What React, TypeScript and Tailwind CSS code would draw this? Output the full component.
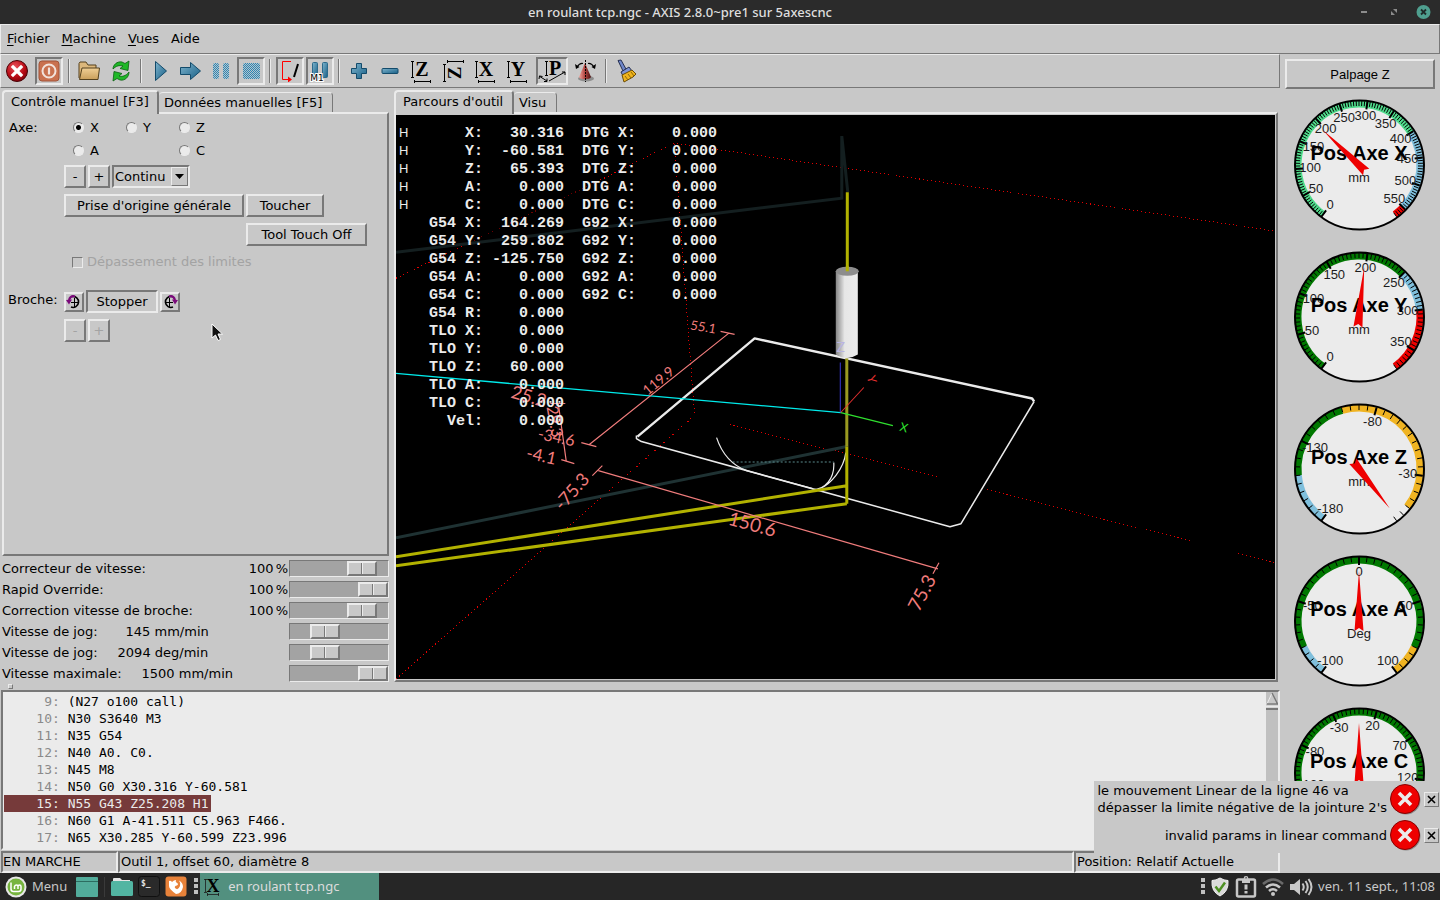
import { useState, type ReactNode } from 'react';
import clsx from 'clsx';

const raised = 'border-2 border-t-[#ebebeb] border-l-[#ebebeb] border-r-[#787878] border-b-[#787878]';
const sunken = 'border-2 border-t-[#787878] border-l-[#787878] border-r-[#ebebeb] border-b-[#ebebeb]';

/* ---------- title bar and menu ---------- */

function TitleBar() {
  return (
    <header className="flex h-6 items-center justify-end bg-[#2b2b2b] px-2 font-['Noto_Sans',sans-serif]">
      <h1 className="flex-1 pr-2 pl-1 text-center text-[13px] leading-6 font-medium text-[#dedede]">
        en roulant tcp.ngc - AXIS 2.8.0~pre1 sur 5axescnc
      </h1>
      <div className="flex items-center gap-[14px]">
        <button aria-label="Réduire" className="flex size-4 items-center justify-center">
          <svg width="6" height="2"><rect width="6" height="2" fill="#8c8c8c" /></svg>
        </button>
        <button aria-label="Restaurer" className="flex size-4 items-center justify-center">
          <svg width="6" height="6" viewBox="0 0 6 6" fill="#8c8c8c">
            <path d="M2 0h4v4zM0 2v4h4z" />
          </svg>
        </button>
        <button aria-label="Fermer" className="size-4">
          <svg width="16" height="16" viewBox="0 0 16 16">
            <circle cx="7.500" cy="8" r="7" fill="#4f9f8f" />
            <path d="M5 5.500l5 5M10 5.500l-5 5" stroke="#1f2b29" strokeWidth="1.800" />
          </svg>
        </button>
      </div>
    </header>
  );
}

function MenuBar() {
  return (
    <nav className="flex h-[30px] items-center gap-3 border border-t-[#ebebeb] border-r-[#787878] border-b-[#787878] border-l-[#ebebeb] px-1.5 pb-0.5">
      {['Fichier', 'Machine', 'Vues'].map((m) => (
        <button key={m}>
          <span className="underline underline-offset-2">{m[0]}</span>
          {m.slice(1)}
        </button>
      ))}
      <button>Aide</button>
    </nav>
  );
}

/* ---------- toolbar ---------- */

function Defs() {
  return (
    <svg width="0" height="0" className="absolute">
      <defs>
        <linearGradient id="blue" x1="0" y1="0" x2="1" y2="1">
          <stop offset="0" stopColor="#7fb4cd" />
          <stop offset="1" stopColor="#175f86" />
        </linearGradient>
        <pattern id="stipple" width="2" height="2" patternUnits="userSpaceOnUse">
          <rect width="2" height="2" fill="#b4c4cc" />
          <rect width="1" height="1" fill="#2f86b3" />
          <rect x="1" y="1" width="1" height="1" fill="#2f86b3" />
        </pattern>
        <radialGradient id="red" cx="0.4" cy="0.3" r="0.8">
          <stop offset="0" stopColor="#e8505a" />
          <stop offset="0.600" stopColor="#b80a14" />
          <stop offset="1" stopColor="#6d0008" />
        </radialGradient>
        <linearGradient id="folder" x1="0" y1="0" x2="0" y2="1">
          <stop offset="0" stopColor="#f0cf95" />
          <stop offset="1" stopColor="#c99f5b" />
        </linearGradient>
        <linearGradient id="cone" x1="0" y1="0" x2="1" y2="0">
          <stop offset="0" stopColor="#f2a49c" />
          <stop offset="0.500" stopColor="#b0433f" />
          <stop offset="1" stopColor="#4c1010" />
        </linearGradient>
        <linearGradient id="tool" x1="0" y1="0" x2="1" y2="0">
          <stop offset="0" stopColor="#858585" />
          <stop offset="0.400" stopColor="#e6e6e6" />
          <stop offset="1" stopColor="#ebebeb" />
        </linearGradient>
      </defs>
    </svg>
  );
}

function ViewGlyph({ letter }: { letter: string }) {
  return (
    <svg width="24" height="24" viewBox="0 0 24 24">
      <path d="M2.500 2v17M1 2.500h3M1 18.500h3M4 22.500h17M4.500 21v3M20.500 21v3" stroke="#000" fill="none" />
      <text x="12" y="17" textAnchor="middle" fontFamily="Liberation Serif, serif" fontWeight="bold" fontSize="20">
        {letter}
      </text>
    </svg>
  );
}

const icons: Record<string, ReactNode> = {
  estop: (
    <svg width="24" height="24" viewBox="0 0 24 24">
      <circle cx="12" cy="12" r="10.500" fill="url(#red)" stroke="#4a0206" />
      <path d="M8 8l8 8M16 8l-8 8" stroke="#fff" strokeWidth="3.200" strokeLinecap="square" />
    </svg>
  ),
  power: (
    <svg width="22" height="22" viewBox="0 0 22 22">
      <rect x="1" y="1" width="20" height="20" rx="3" fill="#c9714f" stroke="#a2553a" />
      <circle cx="11" cy="11" r="6.500" fill="none" stroke="#f2e3dc" strokeWidth="2" />
      <path d="M11 7.500v7" stroke="#f2e3dc" strokeWidth="2.200" />
    </svg>
  ),
  open: (
    <svg width="24" height="20" viewBox="0 0 24 20">
      <path d="M2 17V2.500L3 1h6l2 3h8v4" fill="#dcb77b" stroke="#54411e" />
      <path d="M5 7h17.500l-1.500 11.500H2.500z" fill="url(#folder)" stroke="#54411e" />
    </svg>
  ),
  reload: (
    <svg width="22" height="22" viewBox="0 0 22 22" fill="#1fb827" stroke="#0b5f12" strokeWidth="0.800">
      <path d="M3 9c0-4 4-8 9-7l3 1.500 4-2.500-1 9.500-8-2 3-2.500C9 5 6 6 3 9z" />
      <path d="M19 12c0 5-4 9-9 8l-3-1.500-4 2.500 1-9.500 8 2-3 2.500c3 1 7 0 10-4z" />
    </svg>
  ),
  run: (
    <svg width="14" height="22" viewBox="0 0 14 22">
      <path d="M1.500 1.500l11 9.500-11 9.500z" fill="url(#blue)" stroke="#134b6b" />
    </svg>
  ),
  step: (
    <svg width="24" height="20" viewBox="0 0 24 20">
      <path d="M1.500 6.500h10V1.500l10 8.500-10 8.500v-5h-10z" fill="url(#blue)" stroke="#134b6b" />
    </svg>
  ),
  pause: (
    <svg width="18" height="18" viewBox="0 0 18 18" fill="url(#stipple)">
      <rect x="1" y="1" width="6" height="16" rx="2" />
      <rect x="11" y="1" width="6" height="16" rx="2" />
    </svg>
  ),
  stop: (
    <svg width="18" height="18" viewBox="0 0 18 18">
      <rect x="1" y="1" width="17" height="16" rx="2" fill="url(#stipple)" />
    </svg>
  ),
  skip: (
    <svg width="22" height="22" viewBox="0 0 22 22" fill="none">
      <path d="M12 1.500H3.500v18H9" stroke="#f00" />
      <path d="M9 16.500l4 3-4 3z" fill="#f00" />
      <path d="M19 4l-4 13" stroke="#000" strokeWidth="2" />
    </svg>
  ),
  m1: (
    <svg width="24" height="24" viewBox="0 0 24 24">
      <rect x="4.500" y="3.500" width="5" height="15" rx="1" fill="url(#blue)" stroke="#2b6a8c" />
      <rect x="14.500" y="3.500" width="5" height="15" rx="1" fill="url(#blue)" stroke="#2b6a8c" />
      <text x="9" y="22" textAnchor="middle" fontFamily="DejaVu Sans, sans-serif" fontSize="9" stroke="#fff" strokeWidth="2" paintOrder="stroke">
        M1
      </text>
    </svg>
  ),
  plus: (
    <svg width="18" height="18" viewBox="0 0 18 18">
      <path d="M6.500 1.500h5v5h5v5h-5v5h-5v-5h-5v-5h5z" fill="url(#blue)" stroke="#134b6b" strokeLinejoin="round" />
    </svg>
  ),
  minus: (
    <svg width="18" height="18" viewBox="0 0 18 18">
      <rect x="1" y="6.500" width="16" height="5" rx="1" fill="url(#blue)" stroke="#134b6b" />
    </svg>
  ),
  viewZ: <ViewGlyph letter="Z" />,
  viewZ2: (
    <svg width="24" height="24" viewBox="0 0 24 24">
      <path d="M2.500 5v18M1 5.500h3M1 22.500h3M5 2.500h17M5.500 1v3M21.500 1v3" stroke="#000" fill="none" />
      <text x="-14" y="19" transform="rotate(-90)" textAnchor="middle" fontFamily="Liberation Serif, serif" fontWeight="bold" fontSize="19">
        Z
      </text>
    </svg>
  ),
  viewX: <ViewGlyph letter="X" />,
  viewY: <ViewGlyph letter="Y" />,
  viewP: (
    <svg width="28" height="24" viewBox="0 0 28 24">
      <path d="M8.500 2v15M7 2.500h3M7 16.500h3M1 17l8 5M1 20l.500-3 3 .500M6 22.500h3v-3M11 22l16-9M24 13h3v3" stroke="#000" fill="none" />
      <text x="17" y="16" textAnchor="middle" fontFamily="Liberation Serif, serif" fontWeight="bold" fontSize="20">
        P
      </text>
    </svg>
  ),
  rotate: (
    <svg width="24" height="24" viewBox="0 0 24 24">
      <ellipse cx="12" cy="19.500" rx="8" ry="3" fill="#8d8d8d" />
      <path d="M11 4l6 14c-1 3-11 3-12 0z" fill="url(#cone)" />
      <path d="M11.500 1v22" stroke="#000" strokeDasharray="2 1" />
      <path d="M3 8c2-3 4-4 6-3.500M20 8c-2-3-4-4-6-3.500" stroke="#000" strokeWidth="1.200" fill="none" />
      <path d="M1 5l1 5 3.500-2zM22 5l-1 5-3.500-2z" />
    </svg>
  ),
  clear: (
    <svg width="22" height="24" viewBox="0 0 22 24">
      <path d="M2 1.500l3-.5 5 9-3 2z" fill="#6f86c9" stroke="#263052" />
      <path d="M5 13l8-5 3 4-9 5z" fill="#7e93d2" stroke="#263052" />
      <path d="M6 16l10-5 4 4-3 3-9 5z" fill="#f0b41c" stroke="#6b4c06" />
      <path d="M9 17l3 4M12 15l3 4M15 13l3 4" stroke="#8f6a0a" />
    </svg>
  ),
};

type Tool = { id: string; label: string; width: string; on?: boolean };

const toolGroups: Tool[][] = [
  [
    { id: 'estop', label: "Arrêt d'urgence", width: 'w-8' },
    { id: 'power', label: 'Marche', width: 'w-8', on: true },
  ],
  [
    { id: 'open', label: 'Ouvrir', width: 'w-8' },
    { id: 'reload', label: 'Recharger', width: 'w-8' },
  ],
  [
    { id: 'run', label: 'Départ cycle', width: 'w-[30px]' },
    { id: 'step', label: 'Pas à pas', width: 'w-[30px]' },
    { id: 'pause', label: 'Pause', width: 'w-[30px]' },
    { id: 'stop', label: 'Stopper le programme', width: 'w-[30px]', on: true },
  ],
  [
    { id: 'skip', label: 'Ignorer les lignes', width: 'w-[30px]', on: true },
    { id: 'm1', label: 'Pause optionnelle', width: 'w-[30px]', on: true },
  ],
  [
    { id: 'plus', label: 'Zoom avant', width: 'w-[30px]' },
    { id: 'minus', label: 'Zoom arrière', width: 'w-8' },
    { id: 'viewZ', label: 'Vue Z', width: 'w-8' },
    { id: 'viewZ2', label: 'Vue Z tournée', width: 'w-8' },
    { id: 'viewX', label: 'Vue X', width: 'w-8' },
    { id: 'viewY', label: 'Vue Y', width: 'w-8' },
    { id: 'viewP', label: 'Perspective', width: 'w-9', on: true },
    { id: 'rotate', label: 'Rotation', width: 'w-8' },
  ],
  [{ id: 'clear', label: 'Effacer le tracé', width: 'w-8' }],
];

function Toolbar() {
  return (
    <div className="flex h-[34px] items-center border border-t-[#ebebeb] border-r-[#787878] border-b-[#787878] border-l-[#ebebeb]">
      {toolGroups.map((group, i) => (
        <div key={i} className="flex items-center">
          {i > 0 && (
            <span className={clsx('ml-[3px] h-6 w-0.5 border-r border-l border-l-[#787878] border-r-[#ebebeb]', i === 1 ? 'mr-[3px]' : 'mr-1')} />
          )}
          {group.map((t) => (
            <span key={t.id} className={clsx('flex justify-center', t.width)}>
              <button
                aria-label={t.label}
                className={clsx(
                  'flex h-7 items-center justify-center',
                  t.id === 'viewP' ? 'w-8' : 'w-7',
                  t.on ? sunken : 'border-2 border-transparent',
                )}
              >
                <span className="flex shrink-0">{icons[t.id]}</span>
              </button>
            </span>
          ))}
        </div>
      ))}
    </div>
  );
}

/* ---------- left notebook ---------- */

function Tabs({ items }: { items: string[] }) {
  return (
    <div className="flex items-end">
      {items.map((t, i) => (
        <button
          key={t}
          className={clsx(
            'rounded-t-[4px] text-left',
            i === 0
              ? 'relative z-10 -mb-0.5 h-6 min-w-[120px] border-t-2 border-r-2 border-l-2 border-t-[#ebebeb] border-r-[#787878] border-l-[#ebebeb] bg-[#c8c8c8] pr-2 pb-1 pl-[7px]'
              : 'h-5 border-t border-r border-t-[#ebebeb] border-r-[#787878] pr-2.5 pl-[5px]',
          )}
        >
          {t}
        </button>
      ))}
    </div>
  );
}

function PushButton({ children, className, ...rest }: React.ComponentProps<'button'>) {
  return (
    <button className={clsx('flex h-[23px] items-center justify-center leading-none disabled:text-[#a3a3a3]', raised, className)} {...rest}>
      {children}
    </button>
  );
}

function SpindleIcon({ flip }: { flip?: boolean }) {
  return (
    <svg width="16" height="16" viewBox="0 0 16 16" fill="none" className={clsx(flip && '-scale-x-100')}>
      <path d="M6 2.500a5.500 5.500 0 1 1-1 10.500" stroke="#000" strokeWidth="1.600" />
      <path d="M8.500 4v9M5 8.500h7" stroke="#000" />
      <path d="M9 2.500C6 1.500 4 3 3 6" stroke="#7b0a7b" strokeWidth="2.200" />
      <path d="M0 6l6-.5-3 5z" fill="#7b0a7b" />
    </svg>
  );
}

function ManualPanel() {
  const [axis, setAxis] = useState('X');
  const radio = (a: string, pos: string) => (
    <label key={a} className={clsx('flex items-center gap-1.5', pos)}>
      <input
        type="radio"
        name="axis"
        checked={axis === a}
        onChange={() => setAxis(a)}
        className="size-[11px] appearance-none rounded-full border border-t-[#787878] border-r-[#ebebeb] border-b-[#ebebeb] border-l-[#787878] bg-[#ebebeb] checked:bg-[radial-gradient(circle,#000_0_2px,#ebebeb_3px)]"
      />
      {a}
    </label>
  );

  return (
    <section className={clsx('grid flex-1 grid-cols-[60px_1fr] content-start pt-0.5 pr-1', raised)}>
      <span className="pl-[5px] leading-[23px]">Axe:</span>
      <div className="grid grid-cols-[53px_53px_53px] pl-[9px] leading-[23px]">
        {radio('X', '')}
        {radio('Y', '')}
        {radio('Z', '')}
        {radio('A', 'col-start-1')}
        {radio('C', 'col-start-3')}
      </div>

      <div className="col-start-2 flex gap-0.5 pt-[3px]">
        <PushButton className="w-[22px]">-</PushButton>
        <PushButton className="w-[22px]">+</PushButton>
        <div className={clsx('relative h-[23px] w-[78px]', sunken)}>
          <select aria-label="Incrément" className="h-full w-full appearance-none pl-px leading-none outline-none">
            <option>Continu</option>
          </select>
          <span className="pointer-events-none absolute top-0 right-0 flex h-[19px] w-[17px] items-center justify-center border border-t-[#ebebeb] border-r-[#787878] border-b-[#787878] border-l-[#ebebeb] bg-[#c8c8c8]">
            <svg width="9" height="5"><path d="M0 0h9l-4.500 5z" /></svg>
          </span>
        </div>
      </div>

      <div className="col-start-2 grid grid-cols-[180px_auto] justify-start gap-x-0.5 gap-y-1.5 pt-1.5">
        <PushButton>Prise d'origine générale</PushButton>
        <PushButton className="w-[78px]">Toucher</PushButton>
        <PushButton className="col-start-2 w-[121px]">Tool Touch Off</PushButton>
      </div>

      <label className="col-start-2 flex items-center gap-1 pt-1.5 pl-2 leading-5 text-[#a3a3a3]">
        <input
          type="checkbox"
          disabled
          className="size-[11px] appearance-none border border-t-[#787878] border-r-[#ebebeb] border-b-[#ebebeb] border-l-[#787878]"
        />
        Dépassement des limites
      </label>

      <span className="pt-[18px] pl-1 leading-5">Broche:</span>
      <div className="flex items-center gap-0.5 pt-[18px]">
        <button aria-label="Broche anti-horaire" className={clsx('flex size-5 items-center justify-center', raised)}>
          <SpindleIcon />
        </button>
        <button className={clsx('h-[23px] w-[72px] leading-none', sunken)}>Stopper</button>
        <button aria-label="Broche horaire" className={clsx('flex size-5 items-center justify-center', raised)}>
          <SpindleIcon flip />
        </button>
      </div>
      <div className="col-start-2 flex gap-0.5 pt-1.5">
        <PushButton disabled className="w-[22px]">-</PushButton>
        <PushButton disabled className="w-[22px]">+</PushButton>
      </div>
    </section>
  );
}

const overrides = [
  { label: 'Correcteur de vitesse:', value: '100', unit: '%', pos: 84 },
  { label: 'Rapid Override:', value: '100', unit: '%', pos: 100 },
  { label: 'Correction vitesse de broche:', value: '100', unit: '%', pos: 84 },
  { label: 'Vitesse de jog:', value: '145', unit: 'mm/min', pos: 30 },
  { label: 'Vitesse de jog:', value: '2094', unit: 'deg/min', pos: 30 },
  { label: 'Vitesse maximale:', value: '1500', unit: 'mm/min', pos: 100 },
];

function Sliders() {
  return (
    <div className="pt-0.5">
      {overrides.map((o, i) => (
        <div key={i} className="flex h-[21px] items-center">
          <label htmlFor={`ov${i}`} className={clsx(o.unit === '%' && 'flex-1')}>
            {o.label}
          </label>
          {o.unit === '%' ? (
            <span className="flex gap-0.5 pr-px">
              <span>{o.value}</span>
              <span>{o.unit}</span>
            </span>
          ) : (
            <span className={clsx('flex-1', o.value === '145' ? 'pl-7' : 'pl-5')}>
              {o.value} {o.unit}
            </span>
          )}
          <input
            id={`ov${i}`}
            type="range"
            defaultValue={o.pos}
            className="h-[17px] w-[100px] appearance-none border border-t-[#787878] border-r-[#ebebeb] border-b-[#ebebeb] border-l-[#787878] bg-[#a3a3a3] [&::-webkit-slider-thumb]:h-[15px] [&::-webkit-slider-thumb]:w-[30px] [&::-webkit-slider-thumb]:appearance-none [&::-webkit-slider-thumb]:border-2 [&::-webkit-slider-thumb]:border-t-[#ebebeb] [&::-webkit-slider-thumb]:border-r-[#787878] [&::-webkit-slider-thumb]:border-b-[#787878] [&::-webkit-slider-thumb]:border-l-[#ebebeb] [&::-webkit-slider-thumb]:bg-[linear-gradient(90deg,#c8c8c8_12px,#787878_12px_13px,#ebebeb_13px_14px,#c8c8c8_14px)]"
          />
        </div>
      ))}
    </div>
  );
}

/* ---------- preview ---------- */

const dro: [string, string, string?][] = [
  ['X:', '30.316', 'DTG X:'],
  ['Y:', '-60.581', 'DTG Y:'],
  ['Z:', '65.393', 'DTG Z:'],
  ['A:', '0.000', 'DTG A:'],
  ['C:', '0.000', 'DTG C:'],
  ['G54 X:', '164.269', 'G92 X:'],
  ['G54 Y:', '259.802', 'G92 Y:'],
  ['G54 Z:', '-125.750', 'G92 Z:'],
  ['G54 A:', '0.000', 'G92 A:'],
  ['G54 C:', '0.000', 'G92 C:'],
  ['G54 R:', '0.000'],
  ['TLO X:', '0.000'],
  ['TLO Y:', '0.000'],
  ['TLO Z:', '60.000'],
  ['TLO A:', '0.000'],
  ['TLO C:', '0.000'],
  ['Vel:', '0.000'],
];

const dims = [
  { t: '55.1', x: 702, y: 331, a: 10, s: 13 },
  { t: '119.9', x: 661, y: 384, a: -40, s: 14 },
  { t: '25.2', x: 527, y: 402, a: 16, s: 18 },
  { t: '29.3', x: 549, y: 422, a: 80, s: 16 },
  { t: '-34.6', x: 555, y: 442, a: 12, s: 16 },
  { t: '-4.1', x: 540, y: 461, a: 12, s: 17 },
  { t: '-75.3', x: 576, y: 495, a: -48, s: 18 },
  { t: '150.6', x: 750, y: 530, a: 15, s: 19 },
  { t: '75.3', x: 927, y: 595, a: -62, s: 19 },
];

function Scene() {
  return (
    <svg className="absolute inset-0 h-full w-full" viewBox="396 115 879 563" preserveAspectRatio="xMinYMin slice" fill="none">
      <g stroke="#e00000" strokeDasharray="1 3" shapeRendering="crispEdges">
        <path d="M396 278L470 242" />
        <path d="M470 242L600 180" stroke="#6b0000" />
        <path d="M600 180L665 147M673 143L1275 231M674 144L694 415L396 678" />
        <path d="M729 424L937 476M986 489L1192 541M1233 552L1275 562" />
      </g>
      <path d="M396 252L841 198V136L847 192" stroke="#141f20" strokeWidth="3" />
      <path d="M396 537L846 446" stroke="#1f3233" strokeWidth="3" />
      <path d="M732 461.500H833" stroke="#5a8a8c" strokeDasharray="2 2" />

      <path d="M637 436L754 338L1031 398L1033 401" stroke="#ebebeb" strokeWidth="2.400" strokeLinejoin="round" />
      <path d="M1033 401L960 523L949 526L641 441L636 438V435" stroke="#ebebeb" strokeWidth="1.500" strokeLinejoin="round" />
      <path d="M716 437C721 452 730 464 746 470L812 488M833 462C834 478 824 489 812 489M845 452C843 468 830 484 819 488" stroke="#ebebeb" strokeWidth="1.200" />

      <path d="M846.500 192V272M396 556L846 485M396 565L846 503M846 446V503" stroke="#b2b200" strokeWidth="3" />
      <path d="M846 358V446" stroke="#9a9a20" strokeWidth="3" />
      <path d="M835 271V354Q846 361 857 354V271z" fill="url(#tool)" />
      <ellipse cx="846.500" cy="271" rx="11.500" ry="4.500" fill="#8d8d8d" />
      <path d="M846.500 266V271" stroke="#b2b200" strokeWidth="3" />

      <path d="M396 373L840 412" stroke="#00ebeb" strokeWidth="1.300" />
      <path d="M839.500 362V412" stroke="#3a3ad8" />
      <path d="M840 412L863 387" stroke="#e83030" />
      <path d="M840 412L892 425" stroke="#2fe02f" strokeWidth="1.300" />

      <g stroke="#f07c7c" strokeWidth="1.200">
        <path d="M728 333L589 444M720 331L734 334M581 442L596 446" />
        <path d="M598 470L937 568M602 465L592 475M938 562L932 573" />
        <path d="M558 403L566 461M550 403H565M561 459L574 463" />
      </g>
      <g fill="#f07c7c" fontFamily="Lato, sans-serif" fontWeight="400" textAnchor="middle">
        {dims.map((d) => (
          <text key={d.t} x={d.x} y={d.y} fontSize={d.s} transform={`rotate(${d.a} ${d.x} ${d.y})`}>
            {d.t}
          </text>
        ))}
        <text x="902" y="431" fontSize="12" fill="#2fe02f" transform="rotate(15 902 431)">X</text>
        <text x="867" y="380" fontSize="12" fill="#e83030" transform="rotate(75 867 380)">Y</text>
        <text x="840" y="352" fontSize="14" fill="#b9b4e0">Z</text>
      </g>
    </svg>
  );
}

function Preview() {
  return (
    <section className={clsx('flex flex-1', raised)}>
      <div className="relative flex-1 overflow-hidden border-t border-r border-b border-[#c8c8c8] bg-black pt-[9px]">
        <Scene />
        <div className="relative font-['Liberation_Mono',monospace] text-[15px] leading-[20px] font-bold text-[#ebebeb]">
          {dro.map(([label, value, label2], i) => (
            <div key={label} className="flex h-[18px] items-center pl-[3px]">
              <span className="w-[30px] font-['Liberation_Sans',sans-serif] text-[13px] font-normal">{i < 5 && 'H'}</span>
              <span className="pt-0.5 whitespace-pre">
                {label.padStart(6) + value.padStart(9)}
                {label2 && '  ' + label2 + '0.000'.padStart(9)}
              </span>
            </div>
          ))}
        </div>
      </div>
    </section>
  );
}

/* ---------- program listing and status ---------- */

const program: [number, string][] = [
  [9, '(N27 o100 call)'],
  [10, 'N30 S3640 M3'],
  [11, 'N35 G54'],
  [12, 'N40 A0. C0.'],
  [13, 'N45 M8'],
  [14, 'N50 G0 X30.316 Y-60.581'],
  [15, 'N55 G43 Z25.208 H1'],
  [16, 'N60 G1 A-41.511 C5.963 F466.'],
  [17, 'N65 X30.285 Y-60.599 Z23.996'],
];

function Listing() {
  return (
    <section className={clsx('ml-px flex bg-[#ebebeb]', sunken)}>
      <div className="flex-1 pt-px pb-0.5 pl-px font-['DejaVu_Sans_Mono',monospace] text-[13px] leading-[17px] text-black">
        {program.map(([n, code]) => (
          <div key={n} className={clsx('w-fit pl-px whitespace-pre', n === 15 && 'bg-[#763a3a] pr-0.5 text-[#ebebeb]')}>
            <span className={clsx(n !== 15 && 'text-[#8a8a8a]')}>{String(n).padStart(6)}: </span>
            {code}
          </div>
        ))}
      </div>
      <div className="w-3 bg-[#c0c0c0]">
        <svg width="12" height="18" viewBox="0 0 12 18">
          <path d="M6 1L1 12h10z" fill="#c8c8c8" stroke="#ebebeb" />
          <path d="M6 1l5.500 11H1" fill="none" stroke="#787878" strokeWidth="1.500" />
          <path d="M0 14.500h12" stroke="#ebebeb" strokeWidth="2" />
          <path d="M0 17h12" stroke="#787878" strokeWidth="2" />
        </svg>
      </div>
    </section>
  );
}

function StatusBar() {
  return (
    <footer className="ml-px flex h-[23px] pt-px leading-[17px]">
      <span className={clsx('w-[117px]', sunken)}>EN MARCHE</span>
      <span className={clsx('flex-1 pl-px', sunken)}>Outil 1, offset 60, diamètre 8</span>
      <span className={clsx('w-[206px] pl-px', sunken)}>Position: Relatif Actuelle</span>
    </footer>
  );
}

/* ---------- gauges ---------- */

type Zone = [number, string];
type GaugeProps = { title: string; unit: string; min: number; max: number; zones: Zone[]; needle: number };

// dial angles run clockwise from straight down, 36° to 324°
const polar = (deg: number, r: number) => {
  const a = (deg * Math.PI) / 180;
  return [75 - r * Math.sin(a), 76 + r * Math.cos(a)];
};

function Gauge({ title, unit, min, max, zones, needle }: GaugeProps) {
  const angle = (v: number) => 36 + ((v - min) / (max - min)) * 288;
  const ticks = Array.from({ length: Math.floor((max - min) / 5) + 1 }, (_, i) => min + i * 5);
  const majors = ticks.filter((_, i) => i % 10 === 0);

  const arc = (from: number, to: number) => {
    const [x1, y1] = polar(angle(from), 61);
    const [x2, y2] = polar(angle(to), 61);
    return `M${x1} ${y1}A61 61 0 ${angle(to) - angle(from) > 180 ? 1 : 0} 1 ${x2} ${y2}`;
  };
  const tick = (v: number, r1: number, r2: number) => {
    const [x1, y1] = polar(angle(v), r1);
    const [x2, y2] = polar(angle(v), r2);
    return `M${x1} ${y1}L${x2} ${y2}`;
  };

  return (
    <svg width="150" height="152" viewBox="1 0 150 152" className="font-['Liberation_Sans',sans-serif]">
      <circle cx="75" cy="76" r="65" fill="#ebebeb" />
      {zones.map(([end, color], i) => (
        <path key={i} d={arc(i ? zones[i - 1][0] : min, end)} stroke={color} strokeWidth="7" fill="none" />
      ))}
      <circle cx="75.500" cy="76" r="64.500" fill="none" stroke="#000" strokeWidth="2" />
      <path d={ticks.map((v) => tick(v, 59, 64)).join('')} stroke="#000" />
      <path d={majors.map((v) => tick(v, 56, 64)).join('')} stroke="#000" strokeWidth="2" />
      {majors.map((v) => {
        const [x, y] = polar(angle(v), 49);
        return (
          <text key={v} x={x} y={y + 4} textAnchor="middle" fontSize="13" fill="#1c1c1c">
            {v}
          </text>
        );
      })}
      <text x="75" y="71" textAnchor="middle" fontSize="20" fontWeight="bold">{title}</text>
      <text x="75" y="93" textAnchor="middle" fontSize="13" fill="#1c1c1c">{unit}</text>
      <path d="M75 26L79.500 86L75 83L70.500 86z" fill="#ee0000" transform={`rotate(${needle - 180} 75 76)`} />
    </svg>
  );
}

const gauges: GaugeProps[] = [
  { title: 'Pos Axe X', unit: 'mm', min: 0, max: 570, needle: 134, zones: [[400, '#4fdc8c'], [550, '#7fbfdc'], [570, '#ee0000']] },
  { title: 'Pos Axe Y', unit: 'mm', min: 0, max: 380, needle: 186, zones: [[250, '#007800'], [300, '#7fbfdc'], [380, '#ee0000']] },
  { title: 'Pos Axe Z', unit: 'mm', min: -180, max: 0, needle: 322, zones: [[-150, '#7fbfdc'], [-100, '#007800'], [-10, '#f0b422']] },
  { title: 'Pos Axe A', unit: 'Deg', min: -100, max: 100, needle: 180, zones: [[-80, '#7fbfdc'], [80, '#007800'], [100, '#f0b422']] },
  { title: 'Pos Axe C', unit: 'Deg', min: -180, max: 180, needle: 180, zones: [[180, '#007800']] },
];

/* ---------- notifications ---------- */

function Notification({ children }: { children: ReactNode }) {
  return (
    <div className="flex h-9 items-center justify-end gap-0.5 leading-[17px]">
      <p>{children}</p>
      <svg width="32" height="32" viewBox="0 0 32 32">
        <circle cx="17" cy="17" r="14.500" fill="#8a8a8a" />
        <circle cx="16" cy="16" r="14.500" fill="#ee0000" stroke="#8a0000" />
        <path d="M10 10l12 12M22 10l-12 12" stroke="#ebebeb" strokeWidth="3.600" />
      </svg>
      <button aria-label="Fermer la notification" className="ml-px flex size-[15px] items-center justify-center border border-t-[#ebebeb] border-r-[#787878] border-b-[#787878] border-l-[#ebebeb]">
        <svg width="9" height="9" viewBox="0 0 9 9">
          <path d="M1 1l7 7M8 1l-7 7" stroke="#000" strokeWidth="1.600" />
        </svg>
      </button>
    </div>
  );
}

/* ---------- desktop panel ---------- */

function Dots() {
  return (
    <svg width="4" height="18" fill="#c0c0c0">
      <rect y="0" width="4" height="4" />
      <rect y="6" width="4" height="4" />
      <rect y="12" width="4" height="4" />
    </svg>
  );
}

function Taskbar() {
  return (
    <div className="flex h-[27px] items-center bg-[#262626] pr-[5px] pl-[5px] font-['Noto_Sans',sans-serif] text-[13px] text-[#c8c8c8]">
      <button className="flex items-center gap-[5px]">
        <svg width="22" height="22" viewBox="0 0 22 22" fill="none">
          <circle cx="11" cy="11" r="10.500" fill="#e8e8e8" />
          <circle cx="11" cy="11" r="8.500" fill="#77b43f" />
          <path d="M6 6.500v6.500q0 2.500 2.500 2.500h5q2.500 0 2.500-2.500v-2.500q0-1.500-1.500-1.500t-1.500 1.500v2.500M13 10.500q0-1.500-1.500-1.500t-2 1.500v2.500" stroke="#fff" strokeWidth="1.500" />
        </svg>
        Menu
      </button>
      <div className="flex flex-1 items-center pl-[9px]">
        <button aria-label="Bureau">
          <svg width="22" height="20"><rect width="22" height="20" rx="1" fill="#52ac9b" /><path d="M0 4.500h22" stroke="#2c6c60" /></svg>
        </button>
        <span className="mx-1.5 h-5 w-px bg-[#3a3a3a]" />
        <button aria-label="Fichiers">
          <svg width="22" height="20" viewBox="0 0 22 20">
            <path d="M2 4V2q0-1 1-1h6l2 2h8v4H2z" fill="#e4e4e4" />
            <rect y="4" width="22" height="15" rx="1.500" fill="#52b5a2" />
          </svg>
        </button>
        <button aria-label="Terminal" className="ml-[5px]">
          <svg width="22" height="22" viewBox="0 0 22 22">
            <rect x="0.500" y="0.500" width="21" height="20" rx="3" fill="#2a2a2a" stroke="#101010" />
            <text x="3" y="10" fontFamily="DejaVu Sans Mono, monospace" fontWeight="bold" fontSize="8" fill="#e6e6e6">$_</text>
          </svg>
        </button>
        <button aria-label="Firefox" className="ml-[5px]">
          <svg width="22" height="22" viewBox="0 0 22 22">
            <rect x="0.500" y="0.500" width="21" height="20" rx="3" fill="#e8823a" />
            <path d="M4 5q1.500-1 3 1 2-2 4-2-1 2 1 3 2 1 0 2.500-3 .5-2 2.500 3 3 5-2 1-3-1-5.500 4 2 4 6.500-1.500 7-7 7-7-5-7-8z" fill="#fff" />
          </svg>
        </button>
        <span className="ml-[7px]"><Dots /></span>
        <button className="ml-0.5 flex h-[27px] w-[179px] items-center gap-1.5 bg-[#52907f] pl-1 text-[#dcdcdc]">
          <svg width="18" height="18" viewBox="0 0 18 18" className="overflow-visible">
            <path d="M1.500 1v13M0 1.500h3M0 14.500h3M3 16.500h12M3.500 15v3M14.500 15v3" stroke="#1c1c1c" strokeWidth="0.800" />
            <text x="9" y="14" textAnchor="middle" fontFamily="Liberation Serif, serif" fontWeight="bold" fontSize="18" fill="#000">X</text>
          </svg>
          en roulant tcp.ngc
        </button>
      </div>
      <div className="flex items-center gap-[5px]">
        <Dots />
        <svg width="20" height="20" viewBox="0 0 20 20">
          <path d="M10 1q4 2.500 8 2.500 1 11-8 15.500-9-4.500-8-15.500 4 0 8-2.500z" fill="#dadada" stroke="#f2f2f2" />
          <path d="M5.500 9.500l3.500 4.500 6-8.500" fill="none" stroke="#4c8f22" strokeWidth="2.500" />
        </svg>
        <svg width="22" height="22" viewBox="0 0 22 22" fill="none">
          <rect x="2" y="3.500" width="18" height="17" rx="1.500" stroke="#c8c8c8" strokeWidth="2.500" />
          <circle cx="11" cy="2.500" r="1.800" stroke="#c8c8c8" strokeWidth="1.200" />
          <rect x="7" y="3" width="8" height="4" fill="#c8c8c8" />
          <path d="M11 8.500v5M11 15v2.500" stroke="#c8c8c8" strokeWidth="3" />
        </svg>
        <svg width="22" height="20" viewBox="0 0 22 20" fill="none" strokeWidth="2.600">
          <path d="M1 7q10-9 20 0" stroke="#6a6a6a" />
          <path d="M4 10.500q7-6 14 0M7 14q4-3.500 8 0" stroke="#c8c8c8" />
          <circle cx="11" cy="17" r="2" fill="#c8c8c8" />
        </svg>
        <svg width="24" height="20" viewBox="0 0 24 20" fill="none" stroke="#c8c8c8" strokeWidth="2">
          <path d="M1 7h4l6-5v16l-6-5H1z" fill="#c8c8c8" stroke="none" />
          <path d="M13.500 6.500q2.500 3.500 0 7M16.500 4q4.500 6 0 12M19.500 2q6 8 0 16" />
        </svg>
        <time>ven. 11 sept., 11:08</time>
      </div>
    </div>
  );
}

export default function App() {
  return (
    <div className="relative flex min-h-screen flex-col bg-[#c8c8c8] font-['DejaVu_Sans',sans-serif] text-[13px] leading-[17px] text-black">
      <Defs />
      <TitleBar />
      <MenuBar />
      <div className="relative flex flex-1">
        <main className="flex min-w-0 flex-1 flex-col">
          <Toolbar />
          <div className="flex flex-1 pt-0.5">
            <div className="flex w-[389px] flex-col pl-0.5">
              <Tabs items={['Contrôle manuel [F3]', 'Données manuelles [F5]']} />
              <ManualPanel />
              <Sliders />
            </div>
            <div className="flex flex-1 flex-col pr-0.5 pb-0.5 pl-[5px]">
              <Tabs items={["Parcours d'outil", 'Visu']} />
              <Preview />
            </div>
          </div>
          <div className="h-1.5 pl-2">
            <div className="size-[5px] border border-t-[#ebebeb] border-r-[#787878] border-b-[#787878] border-l-[#ebebeb]" />
          </div>
          <Listing />
          <StatusBar />
        </main>

        <aside className="flex w-40 flex-col items-center pt-[5px]">
          <button className={clsx("h-[30px] w-[150px] font-['Liberation_Sans',sans-serif]", raised)}>Palpage Z</button>
          {gauges.map((g) => (
            <Gauge key={g.title} {...g} />
          ))}
        </aside>

        <div className="absolute right-0 bottom-5 bg-[#c8c8c8] pr-px pl-[3px]">
          <Notification>
            le mouvement Linear de la ligne 46 va
            <br />
            dépasser la limite négative de la jointure 2's
          </Notification>
          <Notification>invalid params in linear command</Notification>
        </div>
      </div>
      <Taskbar />

      <svg width="12" height="19" viewBox="0 0 12 19" className="pointer-events-none absolute top-[323px] left-[211px]">
        <path d="M1 1v14l3.500-3 2.500 5.500 2.500-1-2.500-5.500H11.500z" fill="#111" stroke="#fff" />
      </svg>
    </div>
  );
}
